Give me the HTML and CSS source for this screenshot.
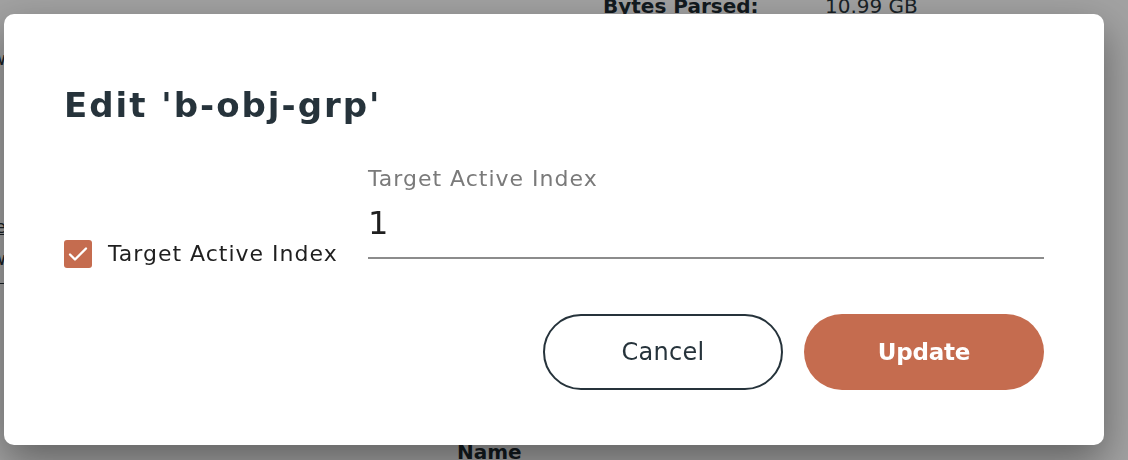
FILE: index.html
```
<!DOCTYPE html>
<html lang="en">
<head>
<meta charset="utf-8">
<title>Edit 'b-obj-grp'</title>
<link rel="stylesheet" href="styles.css">
</head>
<body>
<div class="page">
  <div class="stats">
    <span class="stat-key">Bytes Parsed:</span>
    <span class="stat-val">10.99 GB</span>
  </div>
  <div class="side">
    <span class="side-item s1">Overview</span>
    <span class="side-item s2 link">Change</span>
    <span class="side-item s3">View</span>
    <span class="side-rule"></span>
  </div>
  <div class="table-head">Name</div>
</div>

<div class="overlay">
  <div class="modal" role="dialog" aria-labelledby="dlg-title">
    <h2 class="modal-title" id="dlg-title">Edit 'b-obj-grp'</h2>
    <div class="form-row">
      <label class="check">
        <span class="check-box">
          <svg width="28" height="28" viewBox="0 0 28 28" aria-hidden="true">
            <polyline points="6,14.5 11,19.5 22,8.5" fill="none" stroke="#fff" stroke-width="2.4" stroke-linecap="round" stroke-linejoin="round"/>
          </svg>
        </span>
        <span class="check-label">Target Active Index</span>
      </label>
      <div class="field">
        <div class="field-label">Target Active Index</div>
        <div class="field-input">1</div>
      </div>
    </div>
    <div class="actions">
      <button class="btn btn-outline">Cancel</button>
      <button class="btn btn-primary">Update</button>
    </div>
  </div>
</div>
</body>
</html>
```
FILE: styles.css
```
html, body {
  margin: 0;
  padding: 0;
}
body {
  width: 1128px;
  height: 460px;
  overflow: hidden;
  background: #ffffff;
  font-family: "DejaVu Sans", "Inter", sans-serif;
  color: #26333b;
}

/* background page */
.page {
  height: 460px;
  display: flex;
  flex-direction: column;
  justify-content: space-between;
}
.stats {
  display: flex;
  margin-top: -6px;
  padding-left: 603px;
  font-size: 20px;
  line-height: 24px;
}
.stat-key {
  width: 222px;
  font-weight: 700;
  color: #1d2a31;
}
.stat-val {
  color: #2a363d;
}
.side {
  width: 6px;
  overflow: hidden;
  display: flex;
  flex-direction: column;
  align-items: flex-end;
  font-size: 18px;
  line-height: 22px;
  color: #26333b;
  margin-top: -126px;
}
.side-item {
  white-space: nowrap;
}
.s2 { margin-top: 146px; }
.s3 { margin-top: 10px; }
.link { text-decoration: underline; }
.side-rule {
  display: block;
  width: 40px;
  height: 1px;
  background: #26333b;
  margin-top: 13px;
  flex: none;
}
.table-head {
  padding-left: 457px;
  font-size: 20px;
  line-height: 24px;
  font-weight: 700;
  color: #1d2a31;
  margin-bottom: -4px;
}

/* overlay + modal */
.overlay {
  position: fixed;
  inset: 0;
  background: rgba(0, 0, 0, 0.37);
  display: flex;
  align-items: flex-start;
  padding: 14px 0 0 4px;
}
.modal {
  width: 1100px;
  box-sizing: border-box;
  background: #ffffff;
  border-radius: 10px;
  box-shadow: 0 16px 40px rgba(0, 0, 0, 0.4);
  padding: 67px 60px 55px 60px;
}
.modal-title {
  margin: 0;
  font-size: 34px;
  line-height: 48px;
  font-weight: 700;
  color: #26333b;
  letter-spacing: 2px;
}

.form-row {
  display: flex;
  align-items: flex-end;
  margin-top: 36px;
}
.check {
  display: flex;
  align-items: center;
  gap: 16px;
  width: 304px;
  flex: none;
}
.check-box {
  width: 28px;
  height: 28px;
  border-radius: 3px;
  background: #c56c4f;
  display: flex;
  flex: none;
}
.check-label {
  font-size: 22px;
  line-height: 28px;
  letter-spacing: 1px;
  color: #1f1f1f;
  white-space: nowrap;
}
.field {
  flex: 1;
  margin-bottom: 9px;
  border-bottom: 2px solid #8c8c8c;
  padding-bottom: 14px;
}
.field-label {
  font-size: 22px;
  line-height: 28px;
  letter-spacing: 1px;
  color: #7a7a7a;
}
.field-input {
  margin-top: 10px;
  font-size: 32px;
  line-height: 40px;
  color: #1f1f1f;
}

.actions {
  display: flex;
  justify-content: flex-end;
  gap: 21px;
  margin-top: 46px;
}
.btn {
  width: 240px;
  height: 76px;
  border-radius: 38px;
  font-family: inherit;
  font-size: 22px;
  box-sizing: border-box;
  cursor: pointer;
}
.btn-outline {
  background: #ffffff;
  border: 2px solid #26333b;
  color: #26333b;
  font-size: 24px;
  letter-spacing: 0.3px;
}
.btn-primary {
  background: #c56c4f;
  border: none;
  color: #ffffff;
  font-weight: 700;
  font-size: 23px;
  letter-spacing: -0.2px;
}
```
